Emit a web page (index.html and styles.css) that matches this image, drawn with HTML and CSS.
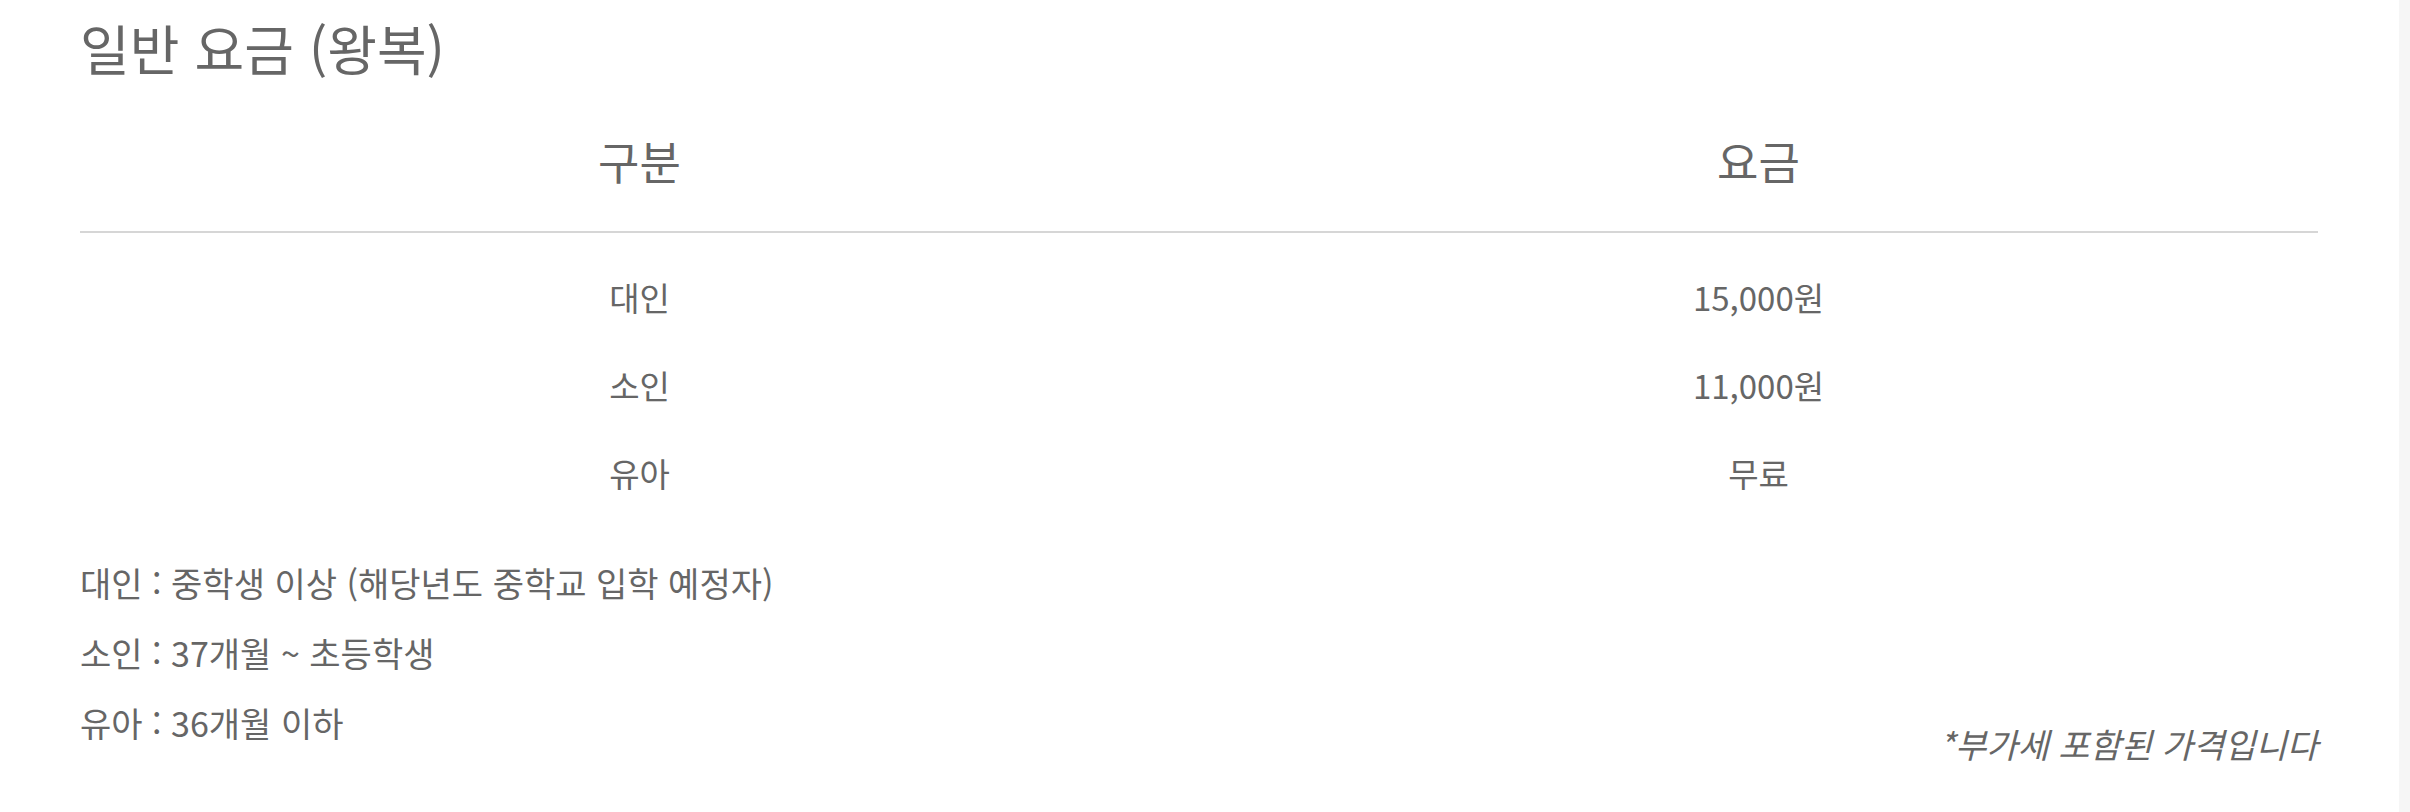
FILE: index.html
```html
<!DOCTYPE html>
<html lang="ko">
  <head>
    <meta charset="UTF-8" />
    <title>일반 요금</title>
    <link rel="stylesheet" href="styles.css">
  </head>
  <body>
    <div class="page">
      <main class="fare">
        <h2 class="fare-title">일반 요금 (왕복)</h2>
        <table class="fare-table">
          <thead>
            <tr>
              <th>구분</th>
              <th>요금</th>
            </tr>
          </thead>
          <tbody>
            <tr>
              <td>대인</td>
              <td>15,000원</td>
            </tr>
            <tr>
              <td>소인</td>
              <td>11,000원</td>
            </tr>
            <tr>
              <td>유아</td>
              <td>무료</td>
            </tr>
          </tbody>
        </table>
        <div class="fare-bottom">
          <ul class="fare-notes">
            <li>대인 : 중학생 이상 (해당년도 중학교 입학 예정자)</li>
            <li>소인 : 37개월 ~ 초등학생</li>
            <li>유아 : 36개월 이하</li>
          </ul>
          <p class="fare-vat">*부가세 포함된 가격입니다</p>
        </div>
      </main>
      <div class="scroll-track"></div>
    </div>
  </body>
</html>
```

FILE: styles.css
```css
body {
  margin: 0;
  font-family: "Noto Sans CJK KR", "Noto Sans", sans-serif;
  color: #666;
  background-color: #fff;
}
.page {
  display: flex;
  min-height: 812px;
}
.fare {
  flex: 1;
  padding: 10px 81px 0 80px;
}
.fare-title {
  margin: 0;
  font-size: 54px;
  font-weight: normal;
  line-height: 76px;
}
.fare-table {
  width: 100%;
  border-collapse: collapse;
  margin-top: 45px;
  table-layout: fixed;
}
.fare-table th {
  font-size: 45px;
  font-weight: normal;
  line-height: 60px;
  padding: 0 0 40px;
  border-bottom: 2px solid #d6d6d6;
}
.fare-table td {
  font-size: 33px;
  line-height: 30px;
  padding: 29px 0;
  text-align: center;
}
.fare-table tbody tr:first-child td {
  padding-top: 49px;
}
.fare-bottom {
  display: flex;
  justify-content: space-between;
  align-items: flex-end;
  margin-top: 31px;
}
.fare-notes {
  list-style: none;
  margin: 0;
  padding: 0;
}
.fare-notes li {
  font-size: 34px;
  line-height: 70px;
}
.fare-vat {
  margin: 0 0 -21px;
  font-size: 34px;
  line-height: 70px;
  font-style: italic;
}
.scroll-track {
  width: 11px;
  background-color: #f6f6f6;
}
```
